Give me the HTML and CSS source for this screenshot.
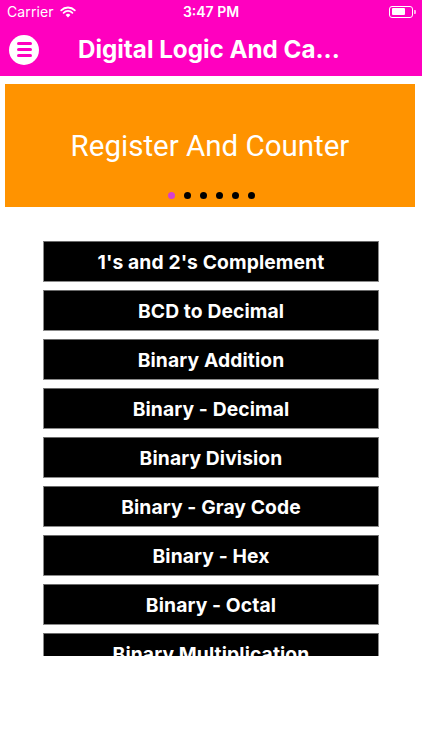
FILE: index.html
```html
<!DOCTYPE html>
<html>
<head>
<meta charset="utf-8">
<link rel="stylesheet" href="styles.css">
</head>
<body>
<div class="top">
  <div class="status">
    <div class="st-left">
      <span class="carrier">Carrier</span>
      <svg class="wifi" width="16" height="12" viewBox="0 0 16 12">
        <path d="M8 11.5 L5.6 8.9 A3.4 3.4 0 0 1 10.4 8.9 Z" fill="#fff"/>
        <path d="M3.6 6.8 A6.2 6.2 0 0 1 12.4 6.8" stroke="#fff" stroke-width="1.8" fill="none" stroke-linecap="round"/>
        <path d="M1.2 4.3 A9.6 9.6 0 0 1 14.8 4.3" stroke="#fff" stroke-width="1.8" fill="none" stroke-linecap="round"/>
      </svg>
    </div>
    <div class="time">3:47 PM</div>
    <div class="st-right">
      <div class="battery"><div class="level"></div></div>
      <div class="nub"></div>
    </div>
  </div>
  <div class="nav">
    <div class="menu">
      <span></span><span></span><span></span>
    </div>
    <div class="title">Digital Logic And Ca...</div>
  </div>
</div>
<div class="banner">
  <div class="banner-text">Register And Counter</div>
  <div class="dots">
    <span class="dot active"></span><span class="dot"></span><span class="dot"></span><span class="dot"></span><span class="dot"></span><span class="dot"></span>
  </div>
</div>
<div class="list">
  <div class="item">1's and 2's Complement</div>
  <div class="item">BCD to Decimal</div>
  <div class="item">Binary Addition</div>
  <div class="item">Binary - Decimal</div>
  <div class="item">Binary Division</div>
  <div class="item">Binary - Gray Code</div>
  <div class="item">Binary - Hex</div>
  <div class="item">Binary - Octal</div>
  <div class="item">Binary Multiplication</div>
</div>
</body>
</html>
```
FILE: styles.css
```css
* { box-sizing: border-box; }
html, body { margin: 0; padding: 0; background: #fff; }
body {
  width: 422px;
  height: 750px;
  overflow: hidden;
  font-family: Inter, "Liberation Sans", sans-serif;
}
.top {
  background: #ff00bf;
  height: 76px;
  display: flex;
  flex-direction: column;
}
.status {
  height: 23px;
  display: flex;
  align-items: center;
  justify-content: space-between;
  padding: 0 6px 0 7px;
  color: #fff;
  position: relative;
}
.st-left { display: flex; align-items: center; gap: 6px; width: 80px; }
.carrier { font-size: 14px; letter-spacing: 0.1px; }
.time {
  font-size: 14px;
  font-weight: 600;
  position: absolute;
  left: 0; right: 0;
  text-align: center;
  pointer-events: none;
}
.st-right { display: flex; align-items: center; gap: 1px; }
.battery {
  width: 24px;
  height: 12px;
  border: 1px solid #fff;
  border-radius: 3px;
  padding: 1.5px;
}
.level { width: 13px; height: 100%; background: #fff; border-radius: 1px; }
.nub { width: 2px; height: 4px; background: #fff; border-radius: 0 1px 1px 0; opacity: 0.7; }
.nav {
  flex: 1;
  display: flex;
  align-items: center;
  padding: 0 0 0 9px;
}
.menu {
  width: 30px;
  height: 30px;
  border-radius: 50%;
  background: #fff;
  display: flex;
  flex-direction: column;
  justify-content: center;
  align-items: center;
  gap: 3px;
}
.menu span {
  display: block;
  width: 15px;
  height: 3px;
  border-radius: 2px;
  background: #ff00bf;
}
.title {
  margin-left: 39px;
  color: #fff;
  font-size: 24.2px;
  font-weight: 700;
  letter-spacing: 0;
}
.banner {
  margin: 8px 7px 0 5px;
  height: 123px;
  background: #ff9300;
  display: flex;
  flex-direction: column;
  align-items: center;
  padding-top: 44px;
}
.banner-text {
  color: #fff;
  font-family: Roboto, Inter, sans-serif;
  font-size: 29.5px;
  font-weight: 400;
  line-height: 36px;
}
.dots {
  margin-top: 28px;
  display: flex;
  gap: 9px;
  margin-left: 2px;
}
.dot {
  width: 7px;
  height: 7px;
  border-radius: 50%;
  background: #000;
}
.dot.active { background: #d63fcf; }
.list {
  margin: 34px 43px 0 43px;
  height: 415px;
  overflow: hidden;
  display: flex;
  flex-direction: column;
  gap: 8px;
}
.item {
  flex: none;
  height: 41px;
  background: #000;
  border: 1px solid #8a8a8a;
  border-top-color: #6a6a6a;
  color: #fff;
  font-size: 19.3px;
  font-weight: 700;
  display: flex;
  align-items: center;
  justify-content: center;
  letter-spacing: 0.1px;
}
```
